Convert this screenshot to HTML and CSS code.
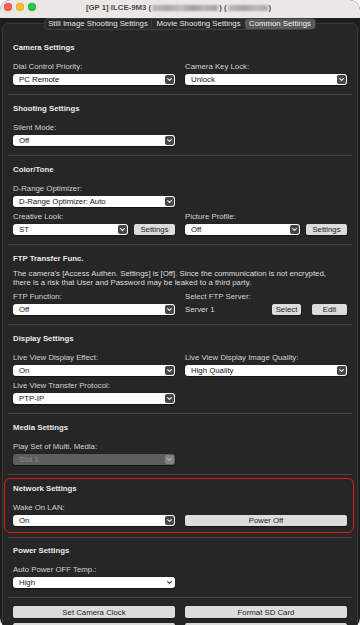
FILE: index.html
```html
<!DOCTYPE html>
<html lang="en">
<head>
<meta charset="utf-8">
<title>[GP 1] ILCE-9M3</title>
<link rel="stylesheet" href="styles.css">
</head>
<body>
<div class="window">
  <div class="titlebar">
    <div class="lights">
      <span class="light red"></span><span class="light yellow"></span><span class="light green"></span>
    </div>
    <div class="title">[GP 1] ILCE-9M3 (<span class="blur b1"></span>) (<span class="blur b2"></span>)</div>
    <div></div>
  </div>

  <div class="tabs">
    <div class="tab t1">Still Image Shooting Settings</div>
    <div class="tab t2">Movie Shooting Settings</div>
    <div class="tab t3 active">Common Settings</div>
  </div>

  <div class="panel">
    <section class="section first">
      <h2>Camera Settings</h2>
      <div class="grid">
        <div class="field">
          <div class="label">Dial Control Priority:</div>
          <div class="select"><span>PC Remote</span><span class="arrow"><svg viewBox="0 0 9 9"><path d="M2.6 3.6 L4.5 5.4 L6.4 3.6"/></svg></span></div>
        </div>
        <div class="field">
          <div class="label">Camera Key Lock:</div>
          <div class="select"><span>Unlock</span><span class="arrow"><svg viewBox="0 0 9 9"><path d="M2.6 3.6 L4.5 5.4 L6.4 3.6"/></svg></span></div>
        </div>
      </div>
    </section>

    <section class="section">
      <h2>Shooting Settings</h2>
      <div class="grid">
        <div class="field">
          <div class="label">Silent Mode:</div>
          <div class="select"><span>Off</span><span class="arrow"><svg viewBox="0 0 9 9"><path d="M2.6 3.6 L4.5 5.4 L6.4 3.6"/></svg></span></div>
        </div>
      </div>
    </section>

    <section class="section">
      <h2>Color/Tone</h2>
      <div class="grid">
        <div class="field">
          <div class="label">D-Range Optimizer:</div>
          <div class="select"><span>D-Range Optimizer: Auto</span><span class="arrow"><svg viewBox="0 0 9 9"><path d="M2.6 3.6 L4.5 5.4 L6.4 3.6"/></svg></span></div>
        </div>
        <div class="field"></div>
        <div class="field">
          <div class="label">Creative Look:</div>
          <div class="ctl-row">
            <div class="select grow"><span>ST</span><span class="arrow"><svg viewBox="0 0 9 9"><path d="M2.6 3.6 L4.5 5.4 L6.4 3.6"/></svg></span></div>
            <div class="btn w-settings">Settings</div>
          </div>
        </div>
        <div class="field">
          <div class="label">Picture Profile:</div>
          <div class="ctl-row">
            <div class="select grow"><span>Off</span><span class="arrow"><svg viewBox="0 0 9 9"><path d="M2.6 3.6 L4.5 5.4 L6.4 3.6"/></svg></span></div>
            <div class="btn w-settings">Settings</div>
          </div>
        </div>
      </div>
    </section>

    <section class="section">
      <h2>FTP Transfer Func.</h2>
      <p class="note">The camera's [Access Authen. Settings] is [Off]. Since the communication is not encrypted,<br>there is a risk that User and Password may be leaked to a third party.</p>
      <div class="grid">
        <div class="field">
          <div class="label">FTP Function:</div>
          <div class="select"><span>Off</span><span class="arrow"><svg viewBox="0 0 9 9"><path d="M2.6 3.6 L4.5 5.4 L6.4 3.6"/></svg></span></div>
        </div>
        <div class="field">
          <div class="label">Select FTP Server:</div>
          <div class="server-row">
            <span class="server">Server 1</span>
            <div class="btn w-select">Select</div>
            <div class="btn w-edit">Edit</div>
          </div>
        </div>
      </div>
    </section>

    <section class="section">
      <h2>Display Settings</h2>
      <div class="grid">
        <div class="field">
          <div class="label">Live View Display Effect:</div>
          <div class="select"><span>On</span><span class="arrow"><svg viewBox="0 0 9 9"><path d="M2.6 3.6 L4.5 5.4 L6.4 3.6"/></svg></span></div>
        </div>
        <div class="field">
          <div class="label">Live View Display Image Quality:</div>
          <div class="select"><span>High Quality</span><span class="arrow"><svg viewBox="0 0 9 9"><path d="M2.6 3.6 L4.5 5.4 L6.4 3.6"/></svg></span></div>
        </div>
        <div class="field">
          <div class="label">Live View Transfer Protocol:</div>
          <div class="select"><span>PTP-IP</span><span class="arrow"><svg viewBox="0 0 9 9"><path d="M2.6 3.6 L4.5 5.4 L6.4 3.6"/></svg></span></div>
        </div>
      </div>
    </section>

    <section class="section">
      <h2>Media Settings</h2>
      <div class="grid">
        <div class="field">
          <div class="label">Play Set of Multi. Media:</div>
          <div class="select disabled"><span>Slot 1</span><span class="arrow"><svg viewBox="0 0 9 9"><path d="M2.6 3.6 L4.5 5.4 L6.4 3.6"/></svg></span></div>
        </div>
      </div>
    </section>

    <section class="section network">
      <div class="highlight"></div>
      <h2>Network Settings</h2>
      <div class="grid">
        <div class="field">
          <div class="label">Wake On LAN:</div>
          <div class="select"><span>On</span><span class="arrow"><svg viewBox="0 0 9 9"><path d="M2.6 3.6 L4.5 5.4 L6.4 3.6"/></svg></span></div>
        </div>
        <div class="field bottom">
          <div class="btn full">Power Off</div>
        </div>
      </div>
    </section>

    <section class="section power">
      <h2>Power Settings</h2>
      <div class="grid">
        <div class="field">
          <div class="label">Auto Power OFF Temp.:</div>
          <div class="select plain"><span>High</span><span class="arrow"><svg viewBox="0 0 9 9"><path d="M2.6 3.6 L4.5 5.4 L6.4 3.6"/></svg></span></div>
        </div>
      </div>
    </section>

    <section class="section actions">
      <div class="grid">
        <div class="btn tall">Set Camera Clock</div>
        <div class="btn tall">Format SD Card</div>
        <div class="btn tall"></div>
        <div class="btn tall"></div>
      </div>
    </section>
  </div>
</div>
</body>
</html>
```
FILE: styles.css
```css
* { box-sizing: border-box; }

html, body {
  margin: 0;
  height: 100%;
}

body {
  background: #ffffff;
  font-family: "Liberation Sans", Arial, Helvetica, sans-serif;
  font-size: 7.8px;
  overflow: hidden;
}

.window {
  width: 360px;
  height: 628px;
  border-radius: 10px;
  overflow: hidden;
  background: #1e1e1e;
  display: flex;
  flex-direction: column;
}

/* Title bar */
.titlebar {
  height: 18px;
  flex: none;
  background: #ebe7e6;
  display: grid;
  grid-template-columns: 1fr auto 1fr;
  align-items: start;
  padding-top: 3px;
}

.lights {
  display: flex;
  gap: 4px;
  padding-left: 4px;
}

.light {
  width: 8px;
  height: 8px;
  border-radius: 50%;
  display: block;
}
.light.red { background: #fe5f57; box-shadow: inset 0 0 0 0.5px #e0443e; }
.light.yellow { background: #febc2e; box-shadow: inset 0 0 0 0.5px #dea123; }
.light.green { background: #28c840; box-shadow: inset 0 0 0 0.5px #1aab29; }

.title {
  font-weight: bold;
  color: #4b4b4b;
  line-height: 9px;
  white-space: nowrap;
  padding-right: 3px;
}

.blur {
  display: inline-block;
  height: 6px;
  vertical-align: -0.5px;
  filter: blur(1px);
  border-radius: 2px;
}
.blur.b1 {
  width: 66px;
  margin: 0 1px;
  background: linear-gradient(90deg, #b9b9b9 0%, #a8a8a8 25%, #bdbdbd 45%, #9e9e9e 62%, #b4b4b4 78%, #a2a2a2 100%);
}
.blur.b2 {
  width: 40px;
  margin: 0 1px;
  background: linear-gradient(90deg, #bababa 0%, #a3a3a3 40%, #b9b9b9 70%, #a6a6a6 100%);
}

/* Segmented tabs */
.tabs {
  flex: none;
  align-self: center;
  display: flex;
  height: 12px;
  background: #2a2a2a;
  border: 1px solid #3e3e3e;
  border-radius: 4px;
  position: relative;
  z-index: 2;
  color: #e2e2e2;
}

.tab {
  display: flex;
  align-items: center;
  justify-content: center;
  line-height: 10px;
  white-space: nowrap;
}
.tab.t1 { width: 107px; border-right: 1px solid #444; margin: 1px 0; }
.tab.t2 { width: 93px; }
.tab.t3 { width: 70px; }
.tab.active {
  background: #5a5a5a;
  border-radius: 3px;
  color: #f0f0f0;
}

/* Panel */
.panel {
  flex: 1;
  margin: -7px 2px 0;
  border: 1px solid #383838;
  border-radius: 6px;
  background: #262626;
}

.section {
  margin: 0 5px;
  padding: 9px 5px 9px;
  border-top: 1px solid #464646;
}
.section.first {
  border-top: none;
  padding-top: 19px;
}
.section.network {
  position: relative;
  padding-bottom: 11px;
}
.section.power {
  padding-top: 8px;
}
.section.actions {
  padding-top: 8px;
}

h2 {
  font-size: 7.8px;
  font-weight: bold;
  line-height: 10px;
  margin: 0 0 9px;
  color: #e9e9e9;
}

.note {
  margin: -4px 0 5px;
  line-height: 9px;
  color: #dedede;
  white-space: nowrap;
}

.grid {
  display: grid;
  grid-template-columns: 1fr 1fr;
  column-gap: 10px;
  row-gap: 5px;
}

.field.bottom {
  display: flex;
  flex-direction: column;
  justify-content: flex-end;
}

.label {
  line-height: 10px;
  margin-bottom: 2px;
  color: #d2d2d2;
  white-space: nowrap;
}

/* Popup buttons */
.select {
  height: 11px;
  background: #ffffff;
  border-radius: 3px;
  color: #151515;
  display: flex;
  align-items: center;
  justify-content: space-between;
  padding: 0 1px 0 6px;
  box-shadow: 0 0.5px 1px rgba(0, 0, 0, 0.5);
  white-space: nowrap;
}
.select.grow { flex: 1; }

.arrow {
  width: 9px;
  height: 9px;
  border-radius: 2px;
  background: #464646;
  display: flex;
}
.arrow svg {
  width: 9px;
  height: 9px;
  fill: none;
  stroke: #f2f2f2;
  stroke-width: 1.1;
  stroke-linecap: round;
  stroke-linejoin: round;
}

.select.disabled {
  background: #5e5e5e;
  color: #8c8c8c;
}
.select.disabled .arrow { background: #828282; }
.select.disabled .arrow svg { stroke: #b4b4b4; }

.select.plain .arrow { background: transparent; }
.select.plain .arrow svg { stroke: #3a3a3a; }

.ctl-row {
  display: flex;
  gap: 6px;
}

/* Push buttons */
.btn {
  height: 11px;
  background: #dcdcdc;
  border-radius: 2px;
  color: #1c1c1c;
  display: flex;
  align-items: center;
  justify-content: center;
  white-space: nowrap;
  box-shadow: 0 0.5px 1px rgba(0, 0, 0, 0.45);
}
.btn.tall { height: 12px; }
.btn.full { width: 100%; }
.w-settings { width: 41px; flex: none; }
.w-select { width: 29px; flex: none; }
.w-edit { width: 35px; flex: none; margin-left: 11px; }

.server-row {
  display: flex;
  align-items: center;
  height: 11px;
}
.server {
  flex: 1;
  color: #dcdcdc;
}

/* Highlight frame */
.highlight {
  position: absolute;
  top: 3px;
  bottom: 4px;
  left: -4px;
  right: -2px;
  border: 1.5px solid #e3141b;
  border-radius: 6px;
  pointer-events: none;
}
```
